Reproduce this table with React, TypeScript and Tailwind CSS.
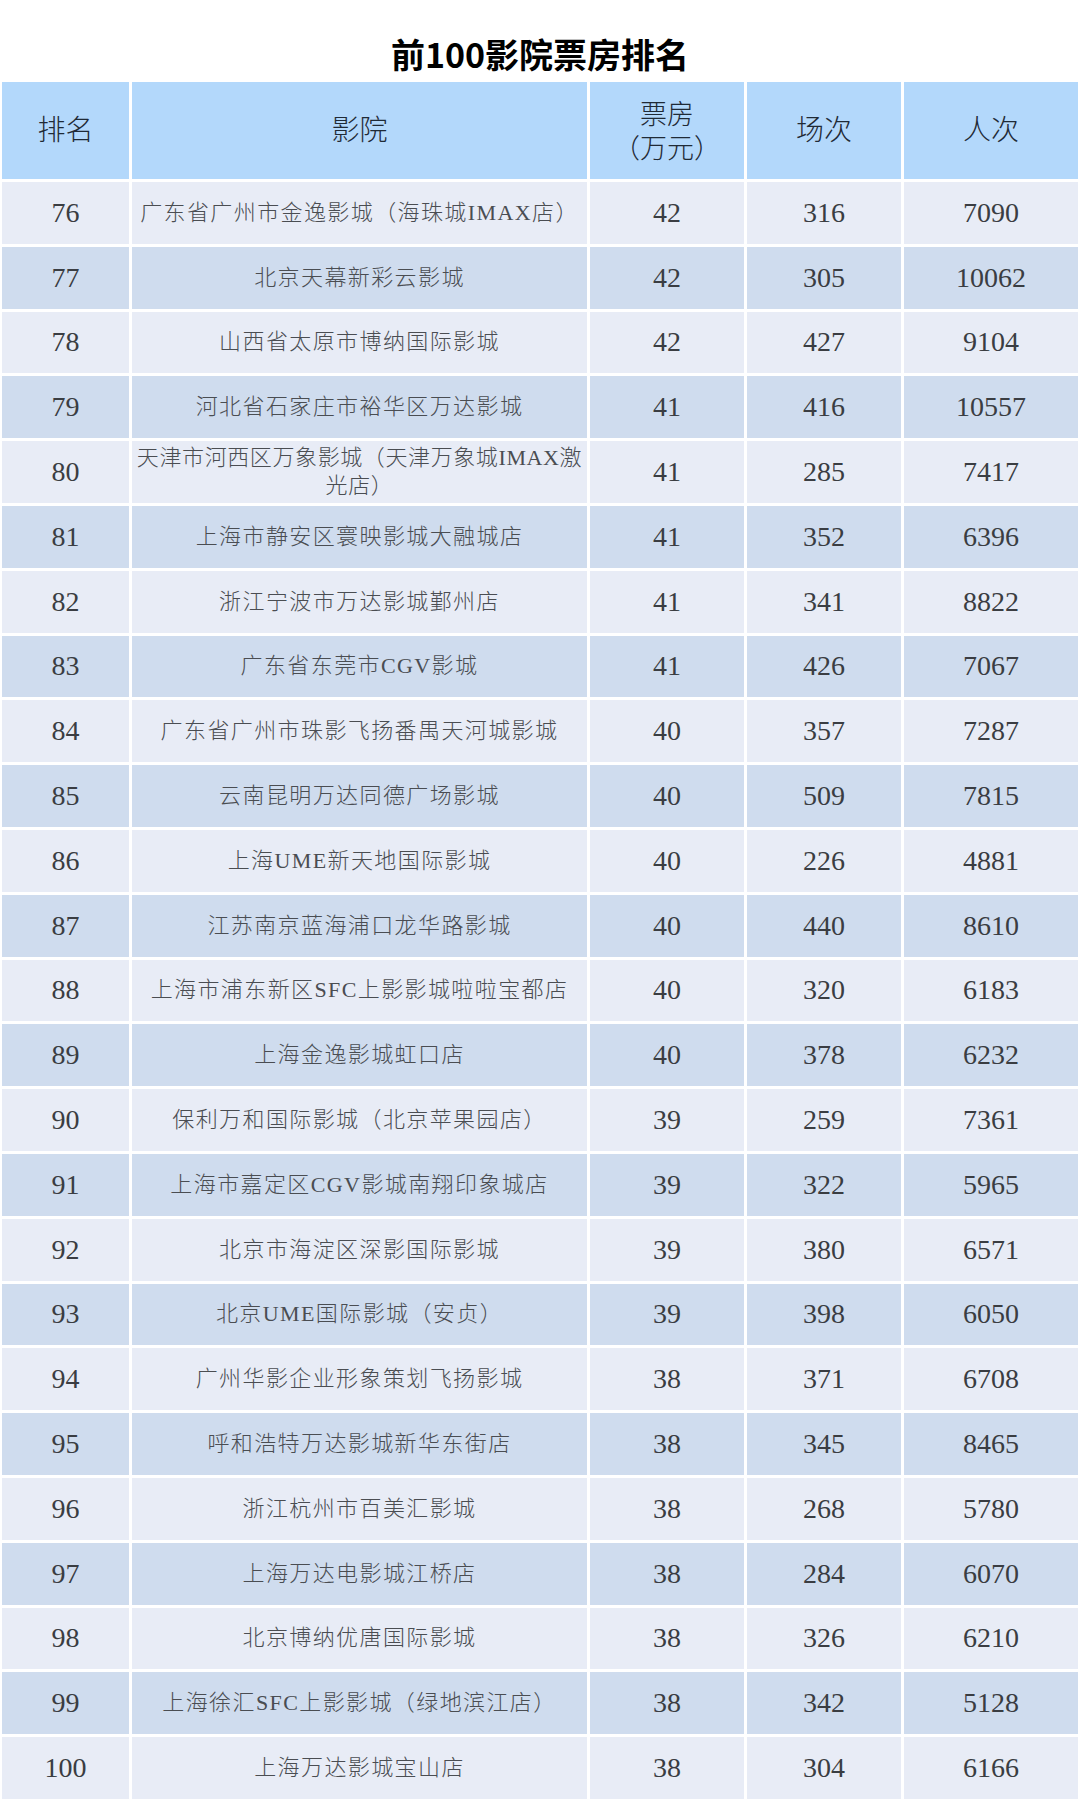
import React from "react";

type Row = [string, React.ReactNode, string, string, string];

const rows: Row[] = [
  ["76", "广东省广州市金逸影城（海珠城IMAX店）", "42", "316", "7090"],
  ["77", "北京天幕新彩云影城", "42", "305", "10062"],
  ["78", "山西省太原市博纳国际影城", "42", "427", "9104"],
  ["79", "河北省石家庄市裕华区万达影城", "41", "416", "10557"],
  [
    "80",
    <span className="tracking-[0.6px] whitespace-nowrap">
      天津市河西区万象影城（天津万象城IMAX激
      <br />
      光店）
    </span>,
    "41",
    "285",
    "7417",
  ],
  ["81", "上海市静安区寰映影城大融城店", "41", "352", "6396"],
  ["82", "浙江宁波市万达影城鄞州店", "41", "341", "8822"],
  ["83", "广东省东莞市CGV影城", "41", "426", "7067"],
  ["84", "广东省广州市珠影飞扬番禺天河城影城", "40", "357", "7287"],
  ["85", "云南昆明万达同德广场影城", "40", "509", "7815"],
  ["86", "上海UME新天地国际影城", "40", "226", "4881"],
  ["87", "江苏南京蓝海浦口龙华路影城", "40", "440", "8610"],
  ["88", "上海市浦东新区SFC上影影城啦啦宝都店", "40", "320", "6183"],
  ["89", "上海金逸影城虹口店", "40", "378", "6232"],
  ["90", "保利万和国际影城（北京苹果园店）", "39", "259", "7361"],
  ["91", "上海市嘉定区CGV影城南翔印象城店", "39", "322", "5965"],
  ["92", "北京市海淀区深影国际影城", "39", "380", "6571"],
  ["93", "北京UME国际影城（安贞）", "39", "398", "6050"],
  ["94", "广州华影企业形象策划飞扬影城", "38", "371", "6708"],
  ["95", "呼和浩特万达影城新华东街店", "38", "345", "8465"],
  ["96", "浙江杭州市百美汇影城", "38", "268", "5780"],
  ["97", "上海万达电影城江桥店", "38", "284", "6070"],
  ["98", "北京博纳优唐国际影城", "38", "326", "6210"],
  ["99", "上海徐汇SFC上影影城（绿地滨江店）", "38", "342", "5128"],
  ["100", "上海万达影城宝山店", "38", "304", "6166"],
];

const serif = "[font-family:'Liberation_Serif','Noto_Sans_CJK_SC',serif]";

export default function App() {
  return (
    <div className="w-[1080px] h-[1800px] bg-white overflow-hidden">
      <div className="h-[82px] flex items-center justify-center pt-[26px]">
        <h1 className="text-[34px] font-bold text-black leading-none [font-family:'Noto_Sans_CJK_SC',sans-serif]">
          前100影院票房排名
        </h1>
      </div>
      <div className="ml-[2px] w-[1076px] grid grid-cols-[127px_455px_154px_154px_174px] gap-[3px]">
        {["排名", "影院"].map((h) => (
          <div
            key={h}
            className={`h-[97px] bg-[#b3d8fb] flex items-center justify-center text-[28px] text-[#1f2a36] font-light ${serif}`}
          >
            {h}
          </div>
        ))}
        <div
          className={`h-[97px] bg-[#b3d8fb] flex flex-col items-center justify-center text-[27px] leading-[32px] text-[#1f2a36] font-light ${serif}`}
        >
          <span>票房</span>
          <span className="[font-family:'Noto_Sans_CJK_SC',sans-serif]">（万元）</span>
        </div>
        {["场次", "人次"].map((h) => (
          <div
            key={h}
            className={`h-[97px] bg-[#b3d8fb] flex items-center justify-center text-[28px] text-[#1f2a36] font-light ${serif}`}
          >
            {h}
          </div>
        ))}
        {rows.map((r, i) => {
          const bg = i % 2 === 0 ? "bg-[#e8ecf6]" : "bg-[#cfdcee]";
          return (
            <React.Fragment key={r[0]}>
              <div
                className={`h-[61.8px] ${bg} flex items-center justify-center text-[28px] text-[#3a3d42] ${serif}`}
              >
                {r[0]}
              </div>
              <div
                className={`h-[61.8px] ${bg} flex items-center justify-center text-center text-[22px] leading-[28px] tracking-[1.4px] text-[#4a4d52] font-light ${serif}`}
              >
                <span>{r[1]}</span>
              </div>
              {[r[2], r[3], r[4]].map((v, j) => (
                <div
                  key={j}
                  className={`h-[61.8px] ${bg} flex items-center justify-center text-[28px] text-[#3a3d42] ${serif}`}
                >
                  {v}
                </div>
              ))}
            </React.Fragment>
          );
        })}
      </div>
    </div>
  );
}
